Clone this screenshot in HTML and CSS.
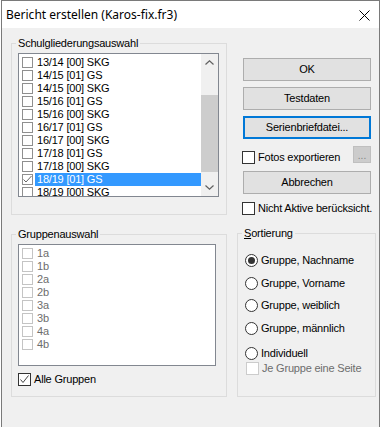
FILE: index.html
```html
<!DOCTYPE html>
<html lang="de">
<head>
    <meta charset="UTF-8">
    <title>Bericht erstellen</title>
    <link rel="stylesheet" href="styles.css">
</head>
<body>
    <div class="window">
        <div class="titlebar">
            <span class="title">Bericht erstellen (Karos-fix.fr3)</span>
            <svg class="close" width="11" height="11" viewBox="0 0 11 11">
                <path d="M0.5 0.5 L10.5 10.5 M10.5 0.5 L0.5 10.5" stroke="#000" stroke-width="1" fill="none"/>
            </svg>
        </div>

        <div class="client">
            <!-- Oberer Bereich -->
            <div class="row row-top">
                <fieldset class="group group-schul">
                    <legend>Schulgliederungsauswahl</legend>
                    <div class="listbox list-schul">
                        <div class="items">
                            <div class="item"><span class="box"></span><span class="label">13/14 [00] SKG</span></div>
                            <div class="item"><span class="box"></span><span class="label">14/15 [01] GS</span></div>
                            <div class="item"><span class="box"></span><span class="label">14/15 [00] SKG</span></div>
                            <div class="item"><span class="box"></span><span class="label">15/16 [01] GS</span></div>
                            <div class="item"><span class="box"></span><span class="label">15/16 [00] SKG</span></div>
                            <div class="item"><span class="box"></span><span class="label">16/17 [01] GS</span></div>
                            <div class="item"><span class="box"></span><span class="label">16/17 [00] SKG</span></div>
                            <div class="item"><span class="box"></span><span class="label">17/18 [01] GS</span></div>
                            <div class="item"><span class="box"></span><span class="label">17/18 [00] SKG</span></div>
                            <div class="item selected"><span class="box"><svg width="9" height="9" viewBox="0 0 9 9"><path d="M0.5 4.5 L3 7 L8.5 1" stroke="#666" stroke-width="1" fill="none"/></svg></span><span class="label">18/19 [01] GS</span></div>
                            <div class="item"><span class="box"></span><span class="label">18/19 [00] SKG</span></div>
                        </div>
                        <div class="scrollbar">
                            <div class="sb-btn">
                                <svg width="9" height="5" viewBox="0 0 9 5"><path d="M0.5 4.5 L4.5 0.8 L8.5 4.5" stroke="#606060" stroke-width="1.2" fill="none"/></svg>
                            </div>
                            <div class="sb-track"><div class="sb-thumb"></div></div>
                            <div class="sb-btn">
                                <svg width="9" height="5" viewBox="0 0 9 5"><path d="M0.5 0.5 L4.5 4.2 L8.5 0.5" stroke="#606060" stroke-width="1.2" fill="none"/></svg>
                            </div>
                        </div>
                    </div>
                </fieldset>

                <div class="actions">
                    <div class="btn">OK</div>
                    <div class="btn">Testdaten</div>
                    <div class="btn focused">Serienbriefdatei...</div>
                    <div class="foto-row">
                        <span class="check"></span>
                        <span class="check-label">Fotos exportieren</span>
                        <span class="dots">...</span>
                    </div>
                    <div class="btn btn-cancel">Abbrechen</div>
                    <div class="check-row">
                        <span class="check"></span>
                        <span class="check-label">Nicht Aktive berücksicht.</span>
                    </div>
                </div>
            </div>

            <!-- Unterer Bereich -->
            <div class="row row-bottom">
                <fieldset class="group group-gruppen">
                    <legend>Gruppenauswahl</legend>
                    <div class="listbox list-gruppen">
                        <div class="items">
                            <div class="item disabled"><span class="box"></span><span class="label">1a</span></div>
                            <div class="item disabled"><span class="box"></span><span class="label">1b</span></div>
                            <div class="item disabled"><span class="box"></span><span class="label">2a</span></div>
                            <div class="item disabled"><span class="box"></span><span class="label">2b</span></div>
                            <div class="item disabled"><span class="box"></span><span class="label">3a</span></div>
                            <div class="item disabled"><span class="box"></span><span class="label">3b</span></div>
                            <div class="item disabled"><span class="box"></span><span class="label">4a</span></div>
                            <div class="item disabled"><span class="box"></span><span class="label">4b</span></div>
                        </div>
                    </div>
                    <div class="check-row alle">
                        <span class="check"><svg width="11" height="11" viewBox="0 0 11 11"><path d="M1.5 5.5 L4 8.5 L9.5 1.5" stroke="#444" stroke-width="1" fill="none"/></svg></span>
                        <span class="check-label">Alle Gruppen</span>
                    </div>
                </fieldset>

                <fieldset class="group group-sort">
                    <legend><u>S</u>ortierung</legend>
                    <div class="radio-row first"><span class="radio on"></span><span class="radio-label">Gruppe, Nachname</span></div>
                    <div class="radio-row r2"><span class="radio"></span><span class="radio-label">Gruppe, Vorname</span></div>
                    <div class="radio-row r3"><span class="radio"></span><span class="radio-label">Gruppe, weiblich</span></div>
                    <div class="radio-row r4"><span class="radio"></span><span class="radio-label">Gruppe, männlich</span></div>
                    <div class="radio-row r5"><span class="radio"></span><span class="radio-label">Individuell</span></div>
                    <div class="check-row seite">
                        <span class="check off"></span>
                        <span class="check-label">Je Gruppe eine Seite</span>
                    </div>
                </fieldset>
            </div>
        </div>
    </div>
</body>
</html>
```

FILE: styles.css
```css
/* Reset */
* {
    margin: 0;
    padding: 0;
    box-sizing: border-box;
}

body {
    background-color: #fff;
    font-family: 'Liberation Sans', Arial, sans-serif;
    font-size: 11px;
    line-height: 13px;
    letter-spacing: -0.2px;
    color: #000;
    overflow: hidden;
}

/* Fenster */
.window {
    margin-left: 1px;
    width: 379px;
    height: 440px;
    border: 1px solid #7a7a7a;
    background-color: #f0f0f0;
}

.titlebar {
    height: 27px;
    background-color: #fff;
    display: flex;
    align-items: center;
    padding-left: 4px;
    padding-right: 9px;
}

.title {
    font-family: 'Noto Sans', sans-serif;
    font-size: 12px;
    letter-spacing: 0;
    flex: 1;
}

.close {
    display: block;
    margin-top: 1px;
}

.client {
    padding: 9px 0 0 9px;
}

.row {
    display: flex;
    align-items: flex-start;
}

/* Gruppenrahmen */
.group {
    border: 1px solid #dcdcdc;
}

.group legend {
    padding: 0 2px;
    line-height: 13px;
}

.group-schul {
    width: 216px;
    padding: 3px 7px 17px 6px;
}

.group-schul legend,
.group-gruppen legend {
    margin-left: -2px;
}

/* Listen */
.listbox {
    border: 1px solid #828790;
    background-color: #fff;
    overflow: hidden;
}

.list-schul {
    width: 201px;
    height: 144px;
    display: flex;
}

.items {
    flex: 1;
    padding-top: 2px;
    overflow: hidden;
}

.item {
    display: flex;
    align-items: center;
    height: 13px;
    white-space: nowrap;
}

.item .box {
    width: 11px;
    height: 11px;
    border: 1px solid #8f8f8f;
    margin-left: 3px;
    margin-right: 2px;
    flex-shrink: 0;
    display: flex;
    align-items: center;
    justify-content: center;
}

.item .label {
    flex: 1;
    height: 13px;
    padding-left: 2px;
}

.item.selected .label {
    background-color: #3399ff;
    color: #fff;
}

.item.disabled .box {
    border-color: #c4c4c4;
}

.item.disabled .label {
    color: #6d6d6d;
}

/* Scrollbar */
.scrollbar {
    width: 17px;
    background-color: #f0f0f0;
    display: flex;
    flex-direction: column;
}

.sb-btn {
    height: 17px;
    display: flex;
    align-items: center;
    justify-content: center;
}

.sb-track {
    flex: 1;
}

.sb-thumb {
    margin-top: 24px;
    height: 77px;
    background-color: #cdcdcd;
}

/* Rechte Spalte */
.actions {
    margin-left: 15px;
    width: 129px;
    padding-top: 21px;
}

.btn {
    margin-left: 1px;
    width: 128px;
    height: 23px;
    border: 1px solid #adadad;
    background-color: #e1e1e1;
    display: flex;
    align-items: center;
    justify-content: center;
    margin-bottom: 6px;
}

.btn.focused {
    border: 2px solid #0078d7;
    margin-bottom: 0;
}

.btn-cancel {
    margin-top: 7px;
    margin-bottom: 0;
}

.foto-row {
    margin-top: 7px;
    height: 18px;
    display: flex;
    align-items: flex-end;
}

.dots {
    margin-left: auto;
    align-self: flex-start;
    width: 18px;
    height: 17px;
    background-color: #cccccc;
    border: 1px solid #bfbfbf;
    color: #838383;
    text-align: center;
    line-height: 17px;
    font-size: 10px;
    letter-spacing: 0;
}

/* Checkboxen */
.check-row {
    display: flex;
    align-items: center;
    height: 13px;
    margin-top: 8px;
}

.check {
    width: 13px;
    height: 13px;
    border: 1px solid #333;
    background-color: #fff;
    flex-shrink: 0;
    display: flex;
    align-items: center;
    justify-content: center;
}

.check.off {
    border-color: #cccccc;
}

.check-label {
    padding-left: 3px;
    white-space: nowrap;
}

/* Unterer Bereich */
.row-bottom {
    margin-top: 12px;
}

.group-gruppen {
    margin-top: 1px;
    width: 216px;
    padding: 3px 10px 10px 6px;
}

.list-gruppen {
    width: 198px;
    height: 122px;
}

.alle {
    margin-top: 7px;
}

.group-sort {
    margin-left: 10px;
    width: 139px;
    padding: 14px 5px 21px 7px;
}

.group-sort legend {
    margin-left: -3px;
}

.radio-row {
    display: flex;
    align-items: center;
    height: 13px;
    white-space: nowrap;
}

.radio-row.r2 { margin-top: 10px; }
.radio-row.r3 { margin-top: 9px; }
.radio-row.r4 { margin-top: 10px; }
.radio-row.r5 { margin-top: 12px; }

.radio {
    width: 13px;
    height: 13px;
    border: 1px solid #333;
    border-radius: 50%;
    background-color: #fff;
    flex-shrink: 0;
    display: flex;
    align-items: center;
    justify-content: center;
}

.radio.on::after {
    content: '';
    width: 7px;
    height: 7px;
    border-radius: 50%;
    background-color: #333;
}

.radio-label {
    padding-left: 3px;
}

.seite {
    margin-top: 2px;
    padding-left: 1px;
}

.seite .check-label {
    color: #6d6d6d;
}
```
